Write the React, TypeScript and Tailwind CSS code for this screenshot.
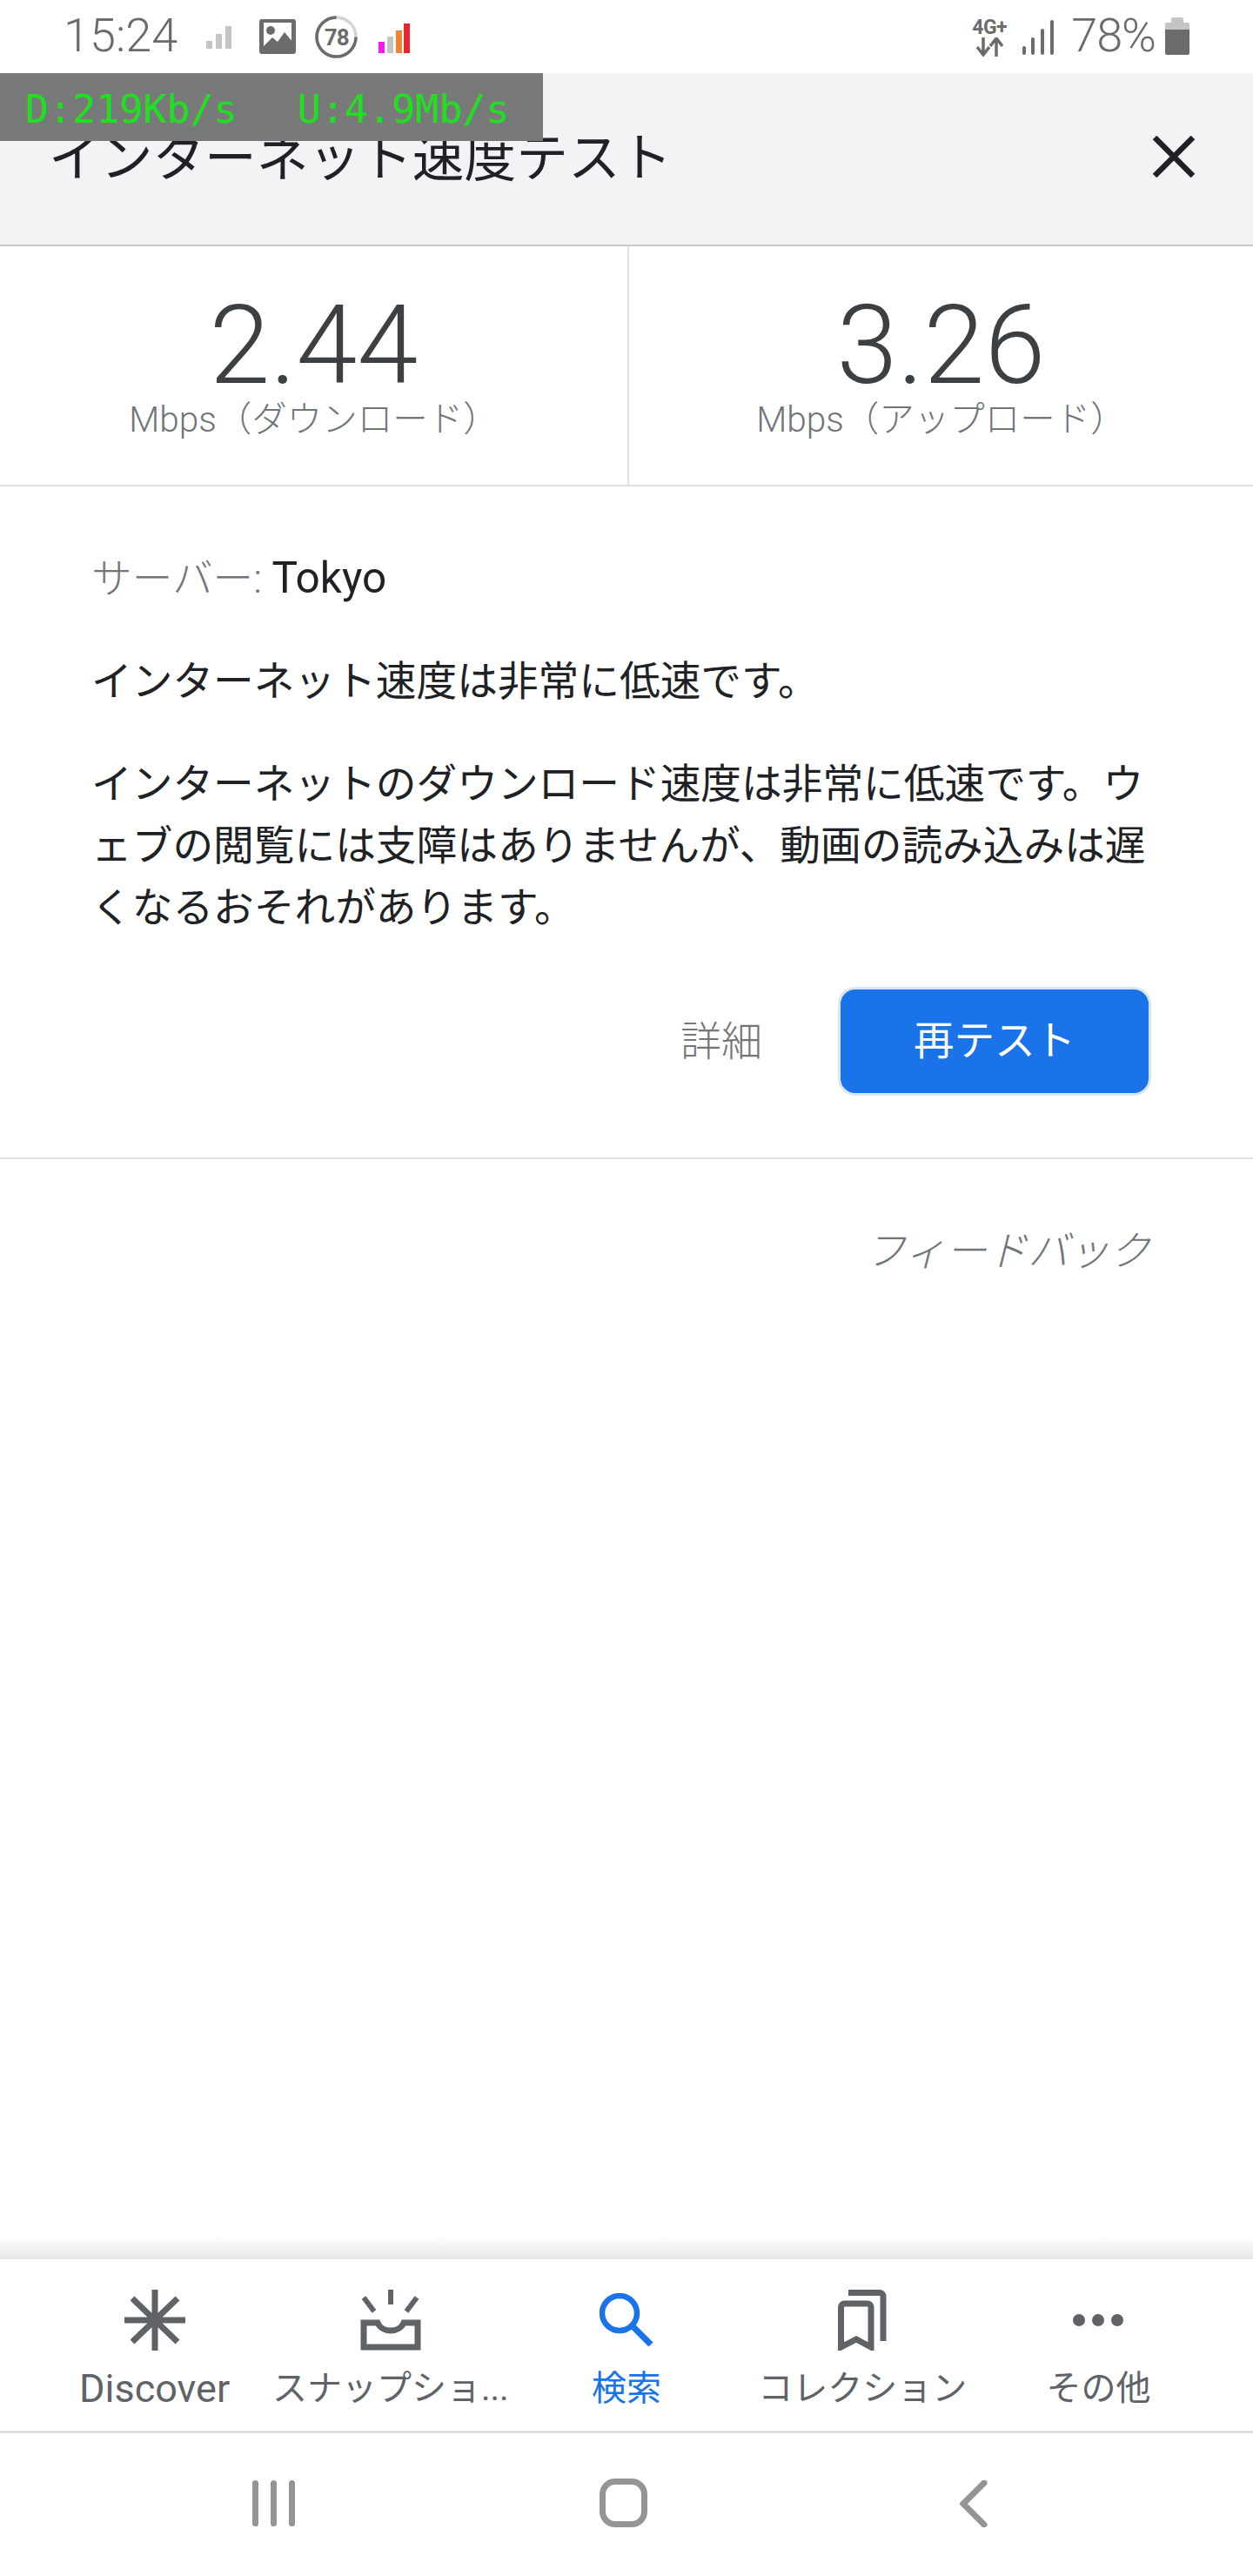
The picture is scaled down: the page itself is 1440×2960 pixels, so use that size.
const FONT = "font-['Roboto','Noto_Sans_CJK_JP',sans-serif]";

function StatusBar() {
  return (
    <div className="flex h-[84px] items-start text-[#6b6b6b]">
      <span className="ml-[73px] mt-[13px] text-[54px] font-light leading-[56px]">15:24</span>
      <svg className="ml-[33px] mt-[30px]" width="30" height="26" viewBox="0 0 30 26">
        <rect x="0" y="17" width="7" height="9" fill="#c4c4c4" />
        <rect x="11" y="9" width="7" height="17" fill="#c4c4c4" />
        <rect x="22" y="0" width="7" height="26" fill="#c4c4c4" />
      </svg>
      <svg className="ml-[31px] mt-[22px]" width="42" height="40" viewBox="0 0 42 40">
        <rect width="42" height="40" rx="3" fill="#6b6b6b" />
        <rect x="5" y="4" width="32" height="27" fill="#fff" />
        <circle cx="13" cy="13" r="5" fill="#6b6b6b" />
        <path d="M4 32 L15 21 L21 26 L29 15 L38 26 V36 H4 Z" fill="#6b6b6b" />
      </svg>
      <div className="relative ml-[22px] mt-[18px] flex h-[49px] w-[49px] items-center justify-center">
        <svg className="absolute inset-0" width="49" height="49" viewBox="0 0 49 49">
          <circle cx="24.5" cy="24.5" r="22.5" fill="none" stroke="#d4d4d4" strokeWidth="3.5" />
          <path d="M47 24.5 A22.5 22.5 0 1 1 24.5 2" fill="none" stroke="#6b6b6b" strokeWidth="3.5" />
        </svg>
        <span className="text-[26px] font-bold leading-none tracking-[-1px]">78</span>
      </div>
      <svg className="ml-[24px] mt-[27px]" width="37" height="34" viewBox="0 0 37 34">
        <rect x="0" y="21" width="7" height="13" fill="#f01cf0" />
        <rect x="10" y="15" width="7" height="19" fill="#c4c4c4" />
        <rect x="20" y="8" width="7" height="26" fill="#f58232" />
        <rect x="29" y="0" width="7" height="34" fill="#e5252f" />
      </svg>
      <div className="flex-1" />
      <div className="mr-[17px] mt-[22px] flex w-[42px] flex-col items-center">
        <span className="text-[23px] font-bold leading-[20px] tracking-[-0.5px]">4G+</span>
        <svg className="mt-[1px]" width="32" height="22" viewBox="0 0 32 22">
          <path d="M9 0 V18 M2 11 L9 20 L16 11" fill="none" stroke="#6b6b6b" strokeWidth="3.5" />
          <path d="M24 22 V3 M17 10 L24 1 L31 10" fill="none" stroke="#6b6b6b" strokeWidth="3.5" />
        </svg>
      </div>
      <svg className="mr-[19px] mt-[23px]" width="37" height="40" viewBox="0 0 37 40">
        <rect x="0" y="30" width="4" height="10" rx="2" fill="#6b6b6b" />
        <rect x="10" y="20" width="4" height="20" rx="2" fill="#6b6b6b" />
        <rect x="21" y="10" width="4" height="30" rx="2" fill="#6b6b6b" />
        <rect x="32" y="0" width="4" height="40" rx="2" fill="#6b6b6b" />
      </svg>
      <span className="mt-[13px] text-[54px] font-light leading-[56px] tracking-[-1px]">78%</span>
      <svg className="ml-[11px] mr-[73px] mt-[20px]" width="28" height="43" viewBox="0 0 28 43">
        <path d="M7 2 a2 2 0 0 1 2 -2 h10 a2 2 0 0 1 2 2 v4 h5 a2 2 0 0 1 2 2 v6 H0 V8 a2 2 0 0 1 2 -2 h5 Z" fill="#c4c4c4" />
        <path d="M0 14 H28 V41 a2 2 0 0 1 -2 2 H2 a2 2 0 0 1 -2 -2 Z" fill="#6b6b6b" />
      </svg>
    </div>
  );
}

function Stat({ value, label, border }: { value: string; label: string; border?: boolean }) {
  return (
    <div className={`flex flex-col items-center pt-[53px] ${border ? "border-r-2 border-[#e0e0e0]" : ""}`}>
      <div className="text-[126px] font-light leading-[122px] text-[#3c4043]">{value}</div>
      <div className="text-[40.5px] font-light leading-[48px] text-[#70757a]">{label}</div>
    </div>
  );
}

function NavItem({ icon, label, active, latin }: { icon: React.ReactNode; label: string; active?: boolean; latin?: boolean }) {
  return (
    <div className="flex flex-col items-center">
      <div className="flex h-[70px] items-center justify-center">{icon}</div>
      <div
        className={`mt-[19px] whitespace-nowrap leading-[50px] ${latin ? "text-[45px]" : "text-[40px]"} ${active ? "text-[#1a73e8]" : "text-[#5f6368]"}`}
      >
        {label}
      </div>
    </div>
  );
}

export default function App() {
  return (
    <div lang="ja" className={`relative flex h-[2960px] w-[1440px] flex-col overflow-hidden bg-white ${FONT}`}>
      <StatusBar />

      {/* speed meter overlay from another app */}
      <div className="absolute left-0 top-[84px] flex h-[78px] w-[624px] bg-[#787a79] pl-[29px] pt-[15px] font-['DejaVu_Sans_Mono',monospace] text-[45px] leading-[54px] text-[#1ee01e]">
        <span>D:219Kb/s</span>
        <span className="ml-[69px]">U:4.9Mb/s</span>
      </div>

      <header className="flex h-[199px] items-center justify-between border-b-2 border-[#c8c8c8] bg-[#f1f3f4] pl-[56px] pr-[67px]">
        <h1 className="text-[59.7px] font-normal leading-[70px] text-[#202124]">インターネット速度テスト</h1>
        <svg className="-mt-[6px]" width="48" height="48" viewBox="0 0 48 48">
          <path d="M2 2 L46 46 M46 2 L2 46" stroke="#202124" strokeWidth="6.5" fill="none" />
        </svg>
      </header>

      <div className="grid h-[276px] grid-cols-[723px_1fr] border-b-2 border-[#e0e0e0]">
        <Stat value="2.44" label="Mbps（ダウンロード）" border />
        <Stat value="3.26" label="Mbps（アップロード）" />
      </div>

      <section className="border-b-2 border-[#e0e0e0] pb-[71px] pl-[105px] pr-[117px] pt-[70px] text-[46.7px] leading-[71px] text-[#202124]">
        <div>
          <span className="font-light text-[#70757a]">サーバー: </span>
          <span className="text-[49.5px]">Tokyo</span>
        </div>
        <p className="mt-[47px]">インターネット速度は非常に低速です。</p>
        <p className="mt-[47px] w-[1240px] [line-break:anywhere]">
          インターネットのダウンロード速度は非常に低速です。ウェブの閲覧には支障はありませんが、動画の読み込みは遅くなるおそれがあります。
        </p>
        <div className="mt-[55px] flex items-center justify-end">
          <span className="mr-[87px] text-[47px] font-light leading-[52px] text-[#757575]">詳細</span>
          <button className="h-[125px] w-[360px] rounded-[20px] border-[3px] border-[#dbe5f0] bg-[#1a73e8] text-[46.5px] font-normal leading-none text-white">
            再テスト
          </button>
        </div>
      </section>

      <main className="flex-1 pr-[118px] pt-[76px] text-right">
        <span className="text-[47px] font-light italic leading-[60px] text-[#70757a]">フィードバック</span>
      </main>

      <div className="h-[26px] bg-gradient-to-b from-white to-[#e6e6e6]" />

      <nav className="grid h-[200px] grid-cols-5 border-b-[3px] border-[#e0e0e0] px-[42px] pt-[35px]">
        <NavItem
          label="Discover"
          latin
          icon={
            <svg width="72" height="70" viewBox="0 0 72 70">
              <path d="M36 0 V70 M1 35 H71 M10 10 L62 60 M62 10 L10 60" stroke="#5f6368" strokeWidth="7" fill="none" />
            </svg>
          }
        />
        <NavItem
          label="スナップショ..."
          icon={
            <svg width="70" height="70" viewBox="0 0 70 70">
              <path d="M35 0 V17 M4 9 L16 25 M65 9 L53 25" stroke="#5f6368" strokeWidth="6" fill="none" />
              <path d="M4 38 H20 C25 50 45 50 50 38 H66 V66 H4 Z" stroke="#5f6368" strokeWidth="7" fill="none" />
            </svg>
          }
        />
        <NavItem
          label="検索"
          active
          icon={
            <svg width="62" height="62" viewBox="0 0 62 62">
              <circle cx="23" cy="23" r="20" stroke="#1a73e8" strokeWidth="6.5" fill="none" />
              <path d="M37 37 L59 59" stroke="#1a73e8" strokeWidth="7" fill="none" />
            </svg>
          }
        />
        <NavItem
          label="コレクション"
          icon={
            <svg width="56" height="70" viewBox="0 0 56 70">
              <path d="M3.5 66 V20 a4 4 0 0 1 4 -4 H34 a4 4 0 0 1 4 4 V66 L21 57 Z" stroke="#5f6368" strokeWidth="7" fill="none" />
              <path d="M12 3.5 H48 a4 4 0 0 1 4 4 V59" stroke="#5f6368" strokeWidth="7" fill="none" />
            </svg>
          }
        />
        <NavItem
          label="その他"
          icon={
            <svg width="58" height="16" viewBox="0 0 58 16">
              <circle cx="7" cy="8" r="7" fill="#5f6368" />
              <circle cx="29" cy="8" r="7" fill="#5f6368" />
              <circle cx="51" cy="8" r="7" fill="#5f6368" />
            </svg>
          }
        />
      </nav>

      <div className="flex h-[164px] items-start pt-[54px]">
        <div className="ml-[290px] flex gap-[14px]">
          <div className="h-[53px] w-[7px] rounded-full bg-[#949494]" />
          <div className="h-[53px] w-[7px] rounded-full bg-[#949494]" />
          <div className="h-[53px] w-[7px] rounded-full bg-[#949494]" />
        </div>
        <div className="-mt-[2px] ml-[350px] h-[56px] w-[55px] rounded-[18px] border-[7px] border-[#949494]" />
        <svg className="ml-[359px]" width="32" height="54" viewBox="0 0 32 54">
          <path d="M28 3 L4 27 L28 51" stroke="#949494" strokeWidth="7" strokeLinecap="round" fill="none" />
        </svg>
      </div>
    </div>
  );
}
